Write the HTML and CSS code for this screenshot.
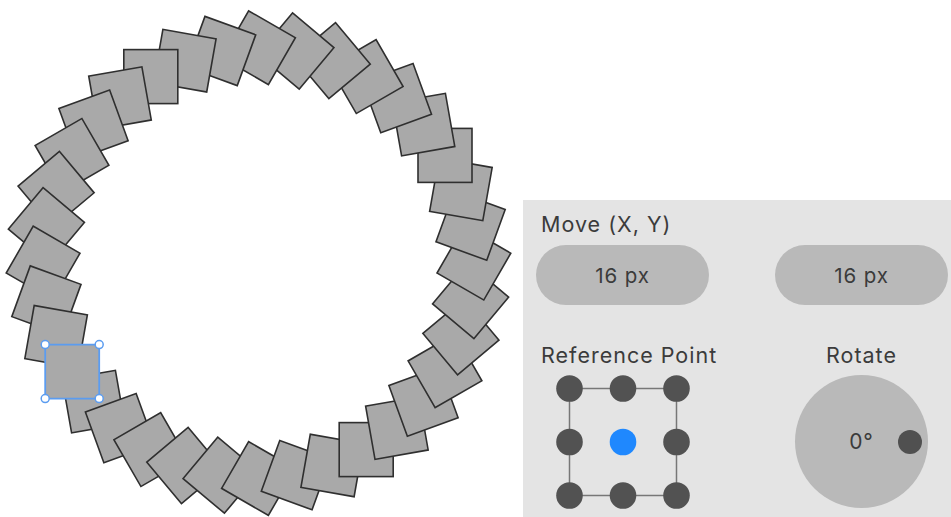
FILE: index.html
```html
<!DOCTYPE html>
<html lang="en">
<head>
  <meta charset="UTF-8">
  <title>Repeat Transform</title>
  <link rel="stylesheet" href="styles.css">
</head>
<body>
  <div class="app">
    <svg class="canvas" width="523" height="517" viewBox="0 0 523 517">
      <!-- copies: each one moved and turned -10deg from the one before -->
      <g class="copies">
        <rect x="-27" y="-27" width="54" height="54" transform="translate(93.5 401.6) rotate(-10)"/>
        <rect x="-27" y="-27" width="54" height="54" transform="translate(120.0 428.1) rotate(-20)"/>
        <rect x="-27" y="-27" width="54" height="54" transform="translate(150.8 449.6) rotate(-30)"/>
        <rect x="-27" y="-27" width="54" height="54" transform="translate(184.8 465.5) rotate(-40)"/>
        <rect x="-27" y="-27" width="54" height="54" transform="translate(221.1 475.2) rotate(-50)"/>
        <rect x="-27" y="-27" width="54" height="54" transform="translate(258.5 478.5) rotate(-60)"/>
        <rect x="-27" y="-27" width="54" height="54" transform="translate(295.9 475.2) rotate(-70)"/>
        <rect x="-27" y="-27" width="54" height="54" transform="translate(332.2 465.5) rotate(-80)"/>
        <rect x="-27" y="-27" width="54" height="54" transform="translate(366.2 449.6) rotate(-90)"/>
        <rect x="-27" y="-27" width="54" height="54" transform="translate(396.9 428.1) rotate(-100)"/>
        <rect x="-27" y="-27" width="54" height="54" transform="translate(423.5 401.6) rotate(-110)"/>
        <rect x="-27" y="-27" width="54" height="54" transform="translate(445.0 370.8) rotate(-120)"/>
        <rect x="-27" y="-27" width="54" height="54" transform="translate(460.9 336.8) rotate(-130)"/>
        <rect x="-27" y="-27" width="54" height="54" transform="translate(470.6 300.5) rotate(-140)"/>
        <rect x="-27" y="-27" width="54" height="54" transform="translate(473.9 263.1) rotate(-150)"/>
        <rect x="-27" y="-27" width="54" height="54" transform="translate(470.6 225.7) rotate(-160)"/>
        <rect x="-27" y="-27" width="54" height="54" transform="translate(460.9 189.4) rotate(-170)"/>
        <rect x="-27" y="-27" width="54" height="54" transform="translate(445.0 155.4) rotate(-180)"/>
        <rect x="-27" y="-27" width="54" height="54" transform="translate(423.5 124.6) rotate(-190)"/>
        <rect x="-27" y="-27" width="54" height="54" transform="translate(396.9 98.1) rotate(-200)"/>
        <rect x="-27" y="-27" width="54" height="54" transform="translate(366.2 76.6) rotate(-210)"/>
        <rect x="-27" y="-27" width="54" height="54" transform="translate(332.2 60.7) rotate(-220)"/>
        <rect x="-27" y="-27" width="54" height="54" transform="translate(295.9 51.0) rotate(-230)"/>
        <rect x="-27" y="-27" width="54" height="54" transform="translate(258.5 47.7) rotate(-240)"/>
        <rect x="-27" y="-27" width="54" height="54" transform="translate(221.1 51.0) rotate(-250)"/>
        <rect x="-27" y="-27" width="54" height="54" transform="translate(184.8 60.7) rotate(-260)"/>
        <rect x="-27" y="-27" width="54" height="54" transform="translate(150.8 76.6) rotate(-270)"/>
        <rect x="-27" y="-27" width="54" height="54" transform="translate(120.0 98.1) rotate(-280)"/>
        <rect x="-27" y="-27" width="54" height="54" transform="translate(93.5 124.6) rotate(-290)"/>
        <rect x="-27" y="-27" width="54" height="54" transform="translate(72.0 155.4) rotate(-300)"/>
        <rect x="-27" y="-27" width="54" height="54" transform="translate(56.1 189.4) rotate(-310)"/>
        <rect x="-27" y="-27" width="54" height="54" transform="translate(46.4 225.7) rotate(-320)"/>
        <rect x="-27" y="-27" width="54" height="54" transform="translate(43.1 263.1) rotate(-330)"/>
        <rect x="-27" y="-27" width="54" height="54" transform="translate(46.4 300.5) rotate(-340)"/>
        <rect x="-27" y="-27" width="54" height="54" transform="translate(56.1 336.8) rotate(-350)"/>
      </g>
      <!-- the original, selected -->
      <g class="selected" transform="translate(72.2 371.6)">
        <rect x="-27" y="-27" width="54" height="54" rx="2"/>
        <circle class="handle" cx="-27" cy="-27" r="4"/>
        <circle class="handle" cx="27" cy="-27" r="4"/>
        <circle class="handle" cx="-27" cy="27" r="4"/>
        <circle class="handle" cx="27" cy="27" r="4"/>
      </g>
    </svg>

    <div class="panel">
      <div class="label">Move (X, Y)</div>
      <div class="pills">
        <div class="pill">16 px</div>
        <div class="pill">16 px</div>
      </div>

      <div class="controls">
        <div class="control">
          <div class="label">Reference Point</div>
          <svg class="ref-grid" width="134" height="134" viewBox="0 0 134 134">
            <rect class="ref-frame" x="13.5" y="13.5" width="107" height="107"/>
            <circle cx="13.5" cy="13.5" r="13.3"/>
            <circle cx="67" cy="13.5" r="13.3"/>
            <circle cx="120.5" cy="13.5" r="13.3"/>
            <circle cx="13.5" cy="67" r="13.3"/>
            <circle class="active" cx="67" cy="67" r="13.3"/>
            <circle cx="120.5" cy="67" r="13.3"/>
            <circle cx="13.5" cy="120.5" r="13.3"/>
            <circle cx="67" cy="120.5" r="13.3"/>
            <circle cx="120.5" cy="120.5" r="13.3"/>
          </svg>
        </div>
        <div class="control center">
          <div class="label">Rotate</div>
          <div class="dial">
            <span class="dial-value">0°</span>
            <span class="knob"></span>
          </div>
        </div>
      </div>
    </div>
  </div>
</body>
</html>
```

FILE: styles.css
```css
body {
  margin: 0;
  background: #fff;
  font-family: Inter, "Liberation Sans", sans-serif;
  color: #3b3b3b;
  overflow: hidden;
}
.app {
  display: flex;
  width: 951px;
  height: 517px;
}
.canvas {
  flex: none;
  display: block;
}
.copies rect {
  fill: #a9a9a9;
  stroke: #2f2f2f;
  stroke-width: 1.6;
}
.selected rect {
  fill: #a9a9a9;
  stroke: #5b9cf0;
  stroke-width: 1.8;
}
.handle {
  fill: #fff;
  stroke: #5b9cf0;
  stroke-width: 1.5;
}

.panel {
  flex: 1;
  align-self: flex-end;
  height: 317px;
  box-sizing: border-box;
  background: #e4e4e4;
  padding: 12px 3px 0 13px;
}
.label {
  font-size: 21.5px;
  line-height: 25px;
  letter-spacing: 1px;
  padding-left: 5px;
  white-space: nowrap;
}
.pills {
  display: flex;
  justify-content: space-between;
  margin-top: 8px;
}
.pill {
  width: 173px;
  height: 60px;
  border-radius: 30px;
  background: #b9b9b9;
  display: flex;
  align-items: center;
  justify-content: center;
  font-size: 20.5px;
  letter-spacing: 0.9px;
}
.controls {
  display: flex;
  justify-content: space-between;
  margin-top: 38px;
}
.control {
  width: 173px;
  display: flex;
  flex-direction: column;
}
.control .ref-grid {
  align-self: center;
  margin-top: 7px;
}
.control.center {
  align-items: center;
}
.control.center .label {
  padding-left: 0;
}
.ref-frame {
  fill: none;
  stroke: #777;
  stroke-width: 1.5;
}
.ref-grid circle {
  fill: #525252;
}
.ref-grid circle.active {
  fill: #1f88fe;
}
.dial {
  position: relative;
  width: 133px;
  height: 133px;
  margin-top: 7px;
  border-radius: 50%;
  background: #b9b9b9;
  display: flex;
  align-items: center;
  justify-content: center;
}
.dial-value {
  font-size: 21px;
  letter-spacing: 0.8px;
}
.knob {
  position: absolute;
  right: 6px;
  top: 55px;
  width: 24px;
  height: 24px;
  border-radius: 50%;
  background: #505050;
}
```
